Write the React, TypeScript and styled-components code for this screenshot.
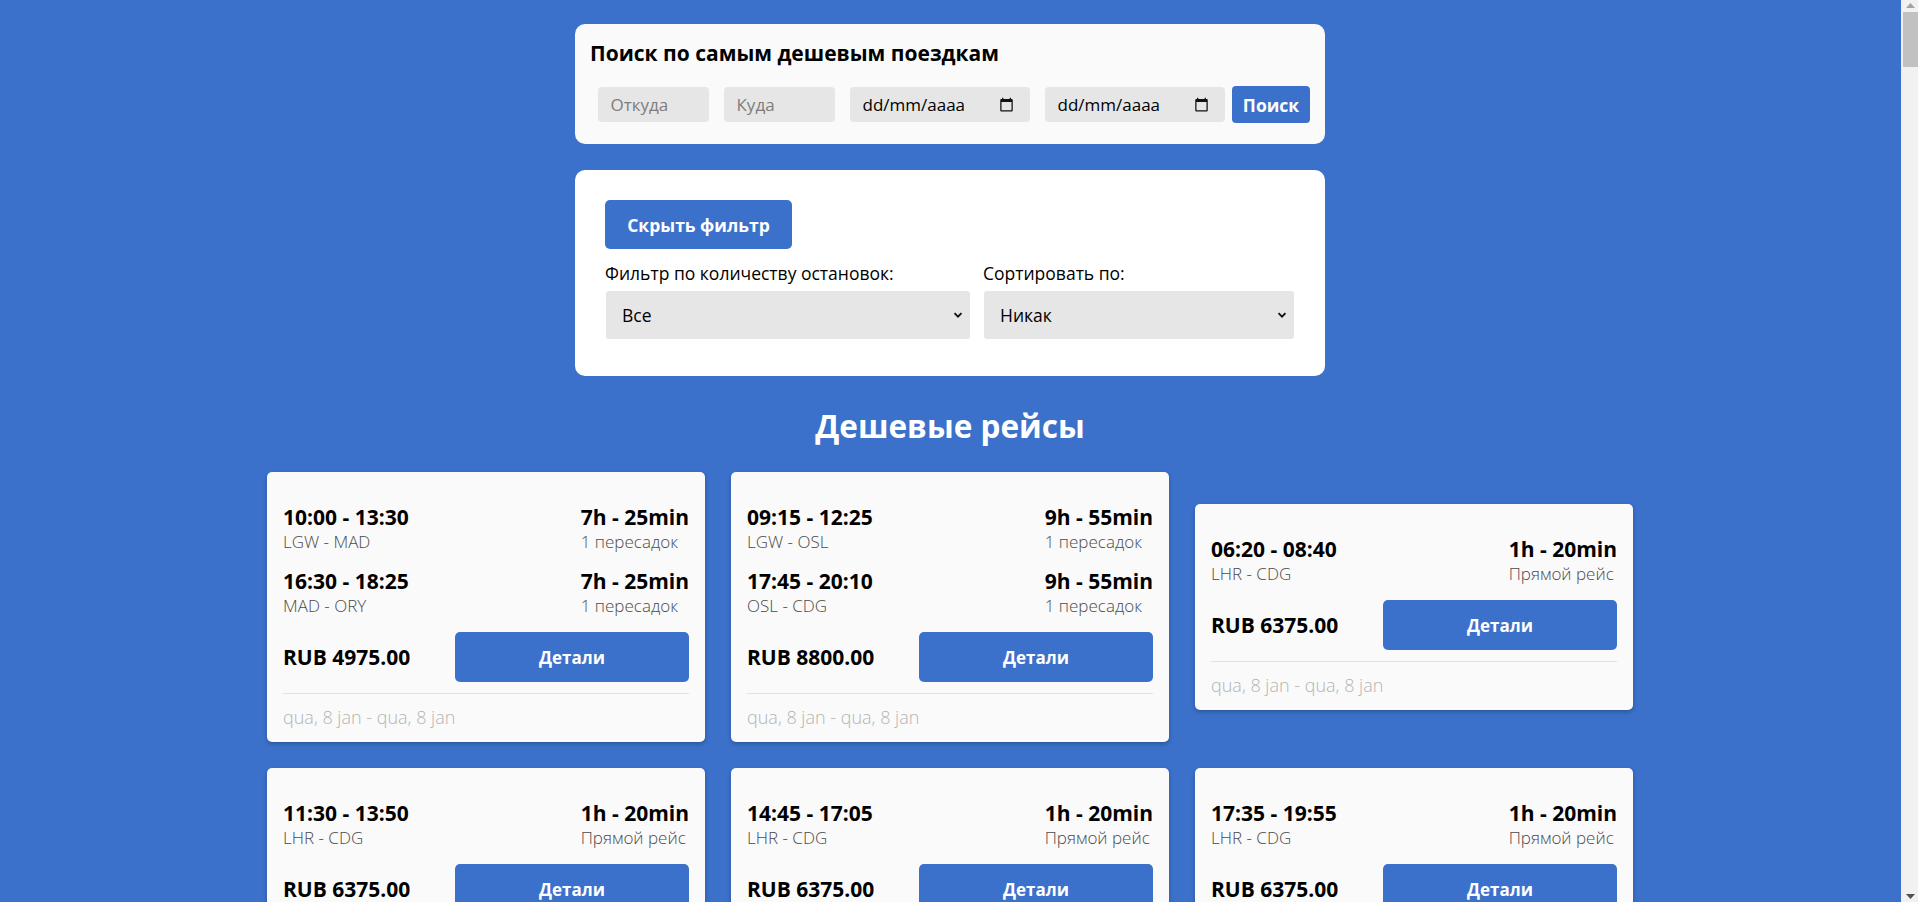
import React from "react";
import styled, { createGlobalStyle } from "styled-components";

const BLUE = "#3b71ca";

const GlobalStyle = createGlobalStyle`
  html, body {
    margin: 0;
    padding: 0;
    background: ${BLUE};
    font-family: "Open Sans", "Liberation Sans", sans-serif;
    color: #000;
  }
  * { box-sizing: border-box; }
`;

/* Page is laid out in the width the reference's browser left beside its scrollbar */
const Page = styled.main`
  display: flex;
  flex-direction: column;
  align-items: center;
  padding: 24px 18px 40px 0;
`;

/* Browser scrollbar that lies over the right edge of the window */
const ScrollTrack = styled.div`
  position: fixed;
  top: 0;
  right: 0;
  width: 17px;
  height: 100vh;
  background: #f1f1f1;
  border-left: 1px solid #e9eef7;
`;

const ScrollThumb = styled.div`
  position: absolute;
  top: 12px;
  left: 1px;
  right: 0;
  height: 55px;
  background: #c1c1c1;
`;

const ScrollArrow = styled.svg<{ $bottom?: boolean }>`
  position: absolute;
  left: 4px;
  ${(p) => (p.$bottom ? "bottom: 3px;" : "top: 3px;")}
`;

const SearchCard = styled.section`
  width: 750px;
  background: #fafafa;
  border-radius: 10px;
  padding: 16px 15px 21px;
`;

const SearchTitle = styled.h3`
  margin: 0 0 19px;
  font-size: 21px;
  line-height: 27px;
  font-weight: 700;
`;

const SearchForm = styled.form`
  display: flex;
  align-items: center;
`;

const Field = styled.input<{ $w: number }>`
  width: ${(p) => p.$w}px;
  height: 35px;
  margin: 0 7.5px;
  padding: 0 13px;
  border: none;
  border-radius: 4px;
  background: #e6e6e6;
  font-family: "Open Sans", sans-serif;
  font-size: 17px;
  color: #000;
  outline: none;
  &::placeholder { color: #7d7d7d; }
`;

const DateField = styled.label`
  width: 180px;
  height: 35px;
  margin: 0 7.5px;
  padding: 0 16px 0 13px;
  border-radius: 4px;
  background: #e6e6e6;
  display: flex;
  align-items: center;
  justify-content: space-between;
  font-size: 17px;
  color: #000;
`;

const SearchButton = styled.button`
  width: 78px;
  height: 37px;
  border: none;
  border-radius: 4px;
  background: ${BLUE};
  color: #fff;
  font-family: "Open Sans", sans-serif;
  font-weight: 700;
  font-size: 17.5px;
  padding: 0;
`;

const FilterCard = styled.section`
  width: 750px;
  margin-top: 26px;
  background: #fff;
  border-radius: 10px;
  padding: 30px 30px 37px;
`;

const ToggleButton = styled.button`
  width: 187px;
  height: 49px;
  border: none;
  border-radius: 5px;
  background: ${BLUE};
  color: #fff;
  font-family: "Open Sans", sans-serif;
  font-weight: 700;
  font-size: 17.5px;
  padding: 0;
  margin-bottom: 13px;
`;

const FilterRow = styled.div`
  display: grid;
  grid-template-columns: 365px 311px;
  column-gap: 13px;
`;

const FilterGroup = styled.div`
  display: flex;
  flex-direction: column;
`;

const FilterLabel = styled.label`
  font-size: 17.5px;
  line-height: 22px;
  margin-bottom: 7px;
`;

const SelectWrap = styled.div`
  position: relative;
  margin-left: 1px;
`;

const Select = styled.select`
  width: 100%;
  height: 48px;
  appearance: none;
  border: none;
  border-radius: 3px;
  background: #e6e6e6;
  padding: 0 30px 0 16px;
  font-family: "Open Sans", sans-serif;
  font-size: 17.5px;
  color: #000;
  outline: none;
`;

const Chevron = styled.svg`
  position: absolute;
  right: 7px;
  top: 50%;
  transform: translateY(-50%);
  pointer-events: none;
`;

const Heading = styled.h2`
  margin: 28px 0 24px;
  font-size: 31.5px;
  line-height: 44px;
  font-weight: 700;
  color: #fff;
`;

const Grid = styled.div`
  width: 1366px;
  display: flex;
  flex-wrap: wrap;
  justify-content: center;
  align-items: center;
  gap: 26px;
`;

const Card = styled.article`
  width: 438px;
  background: #fafafa;
  border-radius: 5px;
  box-shadow: 0 2px 4px rgba(0, 0, 0, 0.25);
  padding: 32px 16px 14px;
`;

const Segment = styled.div`
  display: flex;
  justify-content: space-between;
  margin-bottom: 15px;
`;

const SegCol = styled.div``;

const Big = styled.div`
  font-size: 21px;
  line-height: 27px;
  font-weight: 700;
  color: #000;
`;

const Small = styled.div`
  font-size: 17px;
  line-height: 22px;
  font-weight: 300;
  color: #4a4a4a;
`;

const PriceRow = styled.div`
  display: flex;
  justify-content: space-between;
  align-items: center;
  padding-bottom: 11px;
  border-bottom: 1px solid #e3e3e3;
`;

const Details = styled.button`
  width: 234px;
  height: 50px;
  border: none;
  border-radius: 5px;
  background: ${BLUE};
  color: #fff;
  font-family: "Open Sans", sans-serif;
  font-weight: 700;
  font-size: 17px;
  padding: 0;
`;

const Dates = styled.div`
  padding-top: 12px;
  font-size: 18px;
  line-height: 22px;
  font-weight: 300;
  color: #b5b5b5;
`;

type Seg = { time: string; route: string; dur: string; stops: string };
type Flight = { segs: Seg[]; price: string };

const direct = (time: string): Flight => ({
  segs: [{ time, route: "LHR - CDG", dur: "1h - 20min", stops: "Прямой рейс" }],
  price: "RUB 6375.00",
});

const flights: Flight[] = [
  {
    segs: [
      { time: "10:00 - 13:30", route: "LGW - MAD", dur: "7h - 25min", stops: "1 пересадок" },
      { time: "16:30 - 18:25", route: "MAD - ORY", dur: "7h - 25min", stops: "1 пересадок" },
    ],
    price: "RUB 4975.00",
  },
  {
    segs: [
      { time: "09:15 - 12:25", route: "LGW - OSL", dur: "9h - 55min", stops: "1 пересадок" },
      { time: "17:45 - 20:10", route: "OSL - CDG", dur: "9h - 55min", stops: "1 пересадок" },
    ],
    price: "RUB 8800.00",
  },
  direct("06:20 - 08:40"),
  direct("11:30 - 13:50"),
  direct("14:45 - 17:05"),
  direct("17:35 - 19:55"),
];

const CalendarIcon = () => (
  <svg width="15" height="15" viewBox="0 0 24 24" aria-hidden="true">
    <path
      fill="#111"
      d="M20 3h-1V1h-2v2H7V1H5v2H4c-1.1 0-2 .9-2 2v16c0 1.1.9 2 2 2h16c1.1 0 2-.9 2-2V5c0-1.1-.9-2-2-2zm0 18H4V8h16v13z"
    />
  </svg>
);

const SelectChevron = () => (
  <Chevron width="10" height="10" viewBox="0 0 10 10" aria-hidden="true">
    <path d="M1.5 3.2 L5 6.7 L8.5 3.2" fill="none" stroke="#111" strokeWidth="1.9" />
  </Chevron>
);

export default function App() {
  return (
    <>
      <GlobalStyle />
      <Page>
        <SearchCard>
          <SearchTitle>Поиск по самым дешевым поездкам</SearchTitle>
          <SearchForm onSubmit={(e) => e.preventDefault()}>
            <Field $w={111} placeholder="Откуда" />
            <Field $w={111} placeholder="Куда" />
            <DateField>
              <span>dd/mm/aaaa</span>
              <CalendarIcon />
            </DateField>
            <DateField>
              <span>dd/mm/aaaa</span>
              <CalendarIcon />
            </DateField>
            <SearchButton type="submit">Поиск</SearchButton>
          </SearchForm>
        </SearchCard>

        <FilterCard>
          <ToggleButton>Скрыть фильтр</ToggleButton>
          <FilterRow>
            <FilterGroup>
              <FilterLabel>Фильтр по количеству остановок:</FilterLabel>
              <SelectWrap>
                <Select defaultValue="all">
                  <option value="all">Все</option>
                  <option value="0">Прямой рейс</option>
                  <option value="1">1 пересадка</option>
                </Select>
                <SelectChevron />
              </SelectWrap>
            </FilterGroup>
            <FilterGroup>
              <FilterLabel>Сортировать по:</FilterLabel>
              <SelectWrap>
                <Select defaultValue="none">
                  <option value="none">Никак</option>
                  <option value="price">Цене</option>
                  <option value="time">Времени</option>
                </Select>
                <SelectChevron />
              </SelectWrap>
            </FilterGroup>
          </FilterRow>
        </FilterCard>

        <Heading>Дешевые рейсы</Heading>

        <Grid>
          {flights.map((f, i) => (
            <Card key={i}>
              {f.segs.map((s, j) => (
                <Segment key={j}>
                  <SegCol>
                    <Big>{s.time}</Big>
                    <Small>{s.route}</Small>
                  </SegCol>
                  <SegCol>
                    <Big>{s.dur}</Big>
                    <Small>{s.stops}</Small>
                  </SegCol>
                </Segment>
              ))}
              <PriceRow>
                <Big>{f.price}</Big>
                <Details>Детали</Details>
              </PriceRow>
              <Dates>qua, 8 jan - qua, 8 jan</Dates>
            </Card>
          ))}
        </Grid>
      </Page>

      <ScrollTrack aria-hidden="true">
        <ScrollArrow width="9" height="5" viewBox="0 0 9 5">
          <polygon points="0,5 4.5,0 9,5" fill="#a3a3a3" />
        </ScrollArrow>
        <ScrollThumb />
        <ScrollArrow $bottom width="9" height="5" viewBox="0 0 9 5">
          <polygon points="0,0 9,0 4.5,5" fill="#505050" />
        </ScrollArrow>
      </ScrollTrack>
    </>
  );
}
